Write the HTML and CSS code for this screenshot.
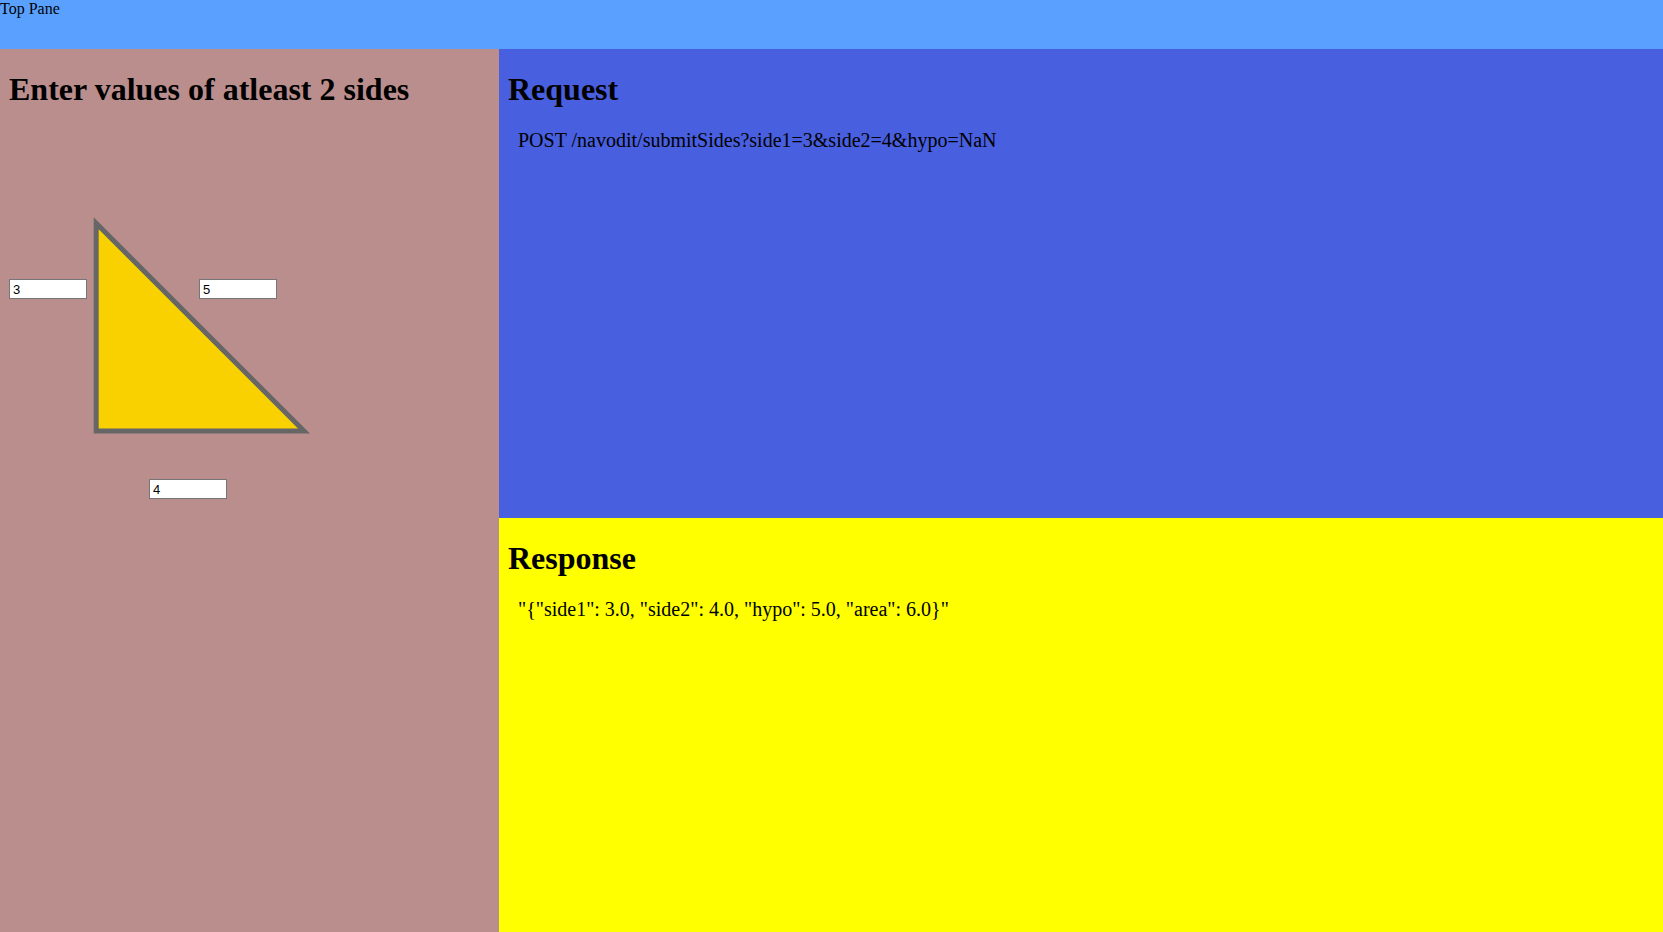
FILE: index.html
```html
<!DOCTYPE html>
<html>
<head>
<meta charset="utf-8">
<title>Triangle</title>
<link rel="stylesheet" href="styles.css">
</head>
<body>
<div class="top-pane">Top Pane</div>
<div class="main">
  <div class="left-pane">
    <h1 class="title">Enter values of atleast 2 sides</h1>
    <div class="diagram">
      <input class="side-input side1" type="text" value="3">
      <input class="side-input hypo" type="text" value="5">
      <svg class="triangle" width="240" height="250" viewBox="0 0 240 250">
        <polygon points="16.2,23.3 16.2,231 224,231" fill="#f9d100" stroke="#666666" stroke-width="5"/>
      </svg>
      <input class="side-input side2" type="text" value="4">
    </div>
  </div>
  <div class="right-pane">
    <div class="request-pane">
      <h1 class="title">Request</h1>
      <p class="payload">POST /navodit/submitSides?side1=3&amp;side2=4&amp;hypo=NaN</p>
    </div>
    <div class="response-pane">
      <h1 class="title">Response</h1>
      <p class="payload">"{"side1": 3.0, "side2": 4.0, "hypo": 5.0, "area": 6.0}"</p>
    </div>
  </div>
</div>
</body>
</html>
```

FILE: styles.css
```css
html, body {
  margin: 0;
  padding: 0;
  height: 100%;
}

body {
  font-family: "Liberation Serif", "Times New Roman", serif;
  font-size: 16px;
  color: #000;
  display: flex;
  flex-direction: column;
  overflow: hidden;
}

.top-pane {
  height: 49px;
  flex: none;
  background: #59a0ff;
}

.main {
  flex: 1;
  display: flex;
  min-height: 0;
}

.left-pane {
  width: 499px;
  flex: none;
  box-sizing: border-box;
  padding: 0 9px;
  background: #bb8e8e;
  display: flow-root;
}

.title {
  font-size: 32px;
  font-weight: bold;
  margin: 22px 0 21.44px;
}

.diagram {
  position: relative;
  height: 400px;
}

.side-input {
  position: absolute;
  box-sizing: border-box;
  width: 78px;
  height: 20px;
  margin: 0;
  padding: 1px 3px;
  border: 1px solid #767676;
  border-radius: 0;
  background: #fff;
  font-family: "Liberation Sans", Arial, sans-serif;
  font-size: 13px;
  color: #000;
  outline: none;
}

.side1 { left: 0; top: 150px; }
.hypo { left: 190px; top: 150px; }
.side2 { left: 140px; top: 350px; }

.triangle {
  position: absolute;
  left: 71px;
  top: 71px;
  overflow: visible;
}

.right-pane {
  flex: 1;
  display: flex;
  flex-direction: column;
  min-width: 0;
}

.request-pane {
  height: 469px;
  flex: none;
  box-sizing: border-box;
  padding: 0 9px;
  background: #485fe0;
  display: flow-root;
}

.response-pane {
  flex: 1;
  box-sizing: border-box;
  padding: 0 9px;
  background: #ffff00;
  display: flow-root;
}

.payload {
  font-size: 20px;
  margin: 20px 0 20px 10px;
}
```
